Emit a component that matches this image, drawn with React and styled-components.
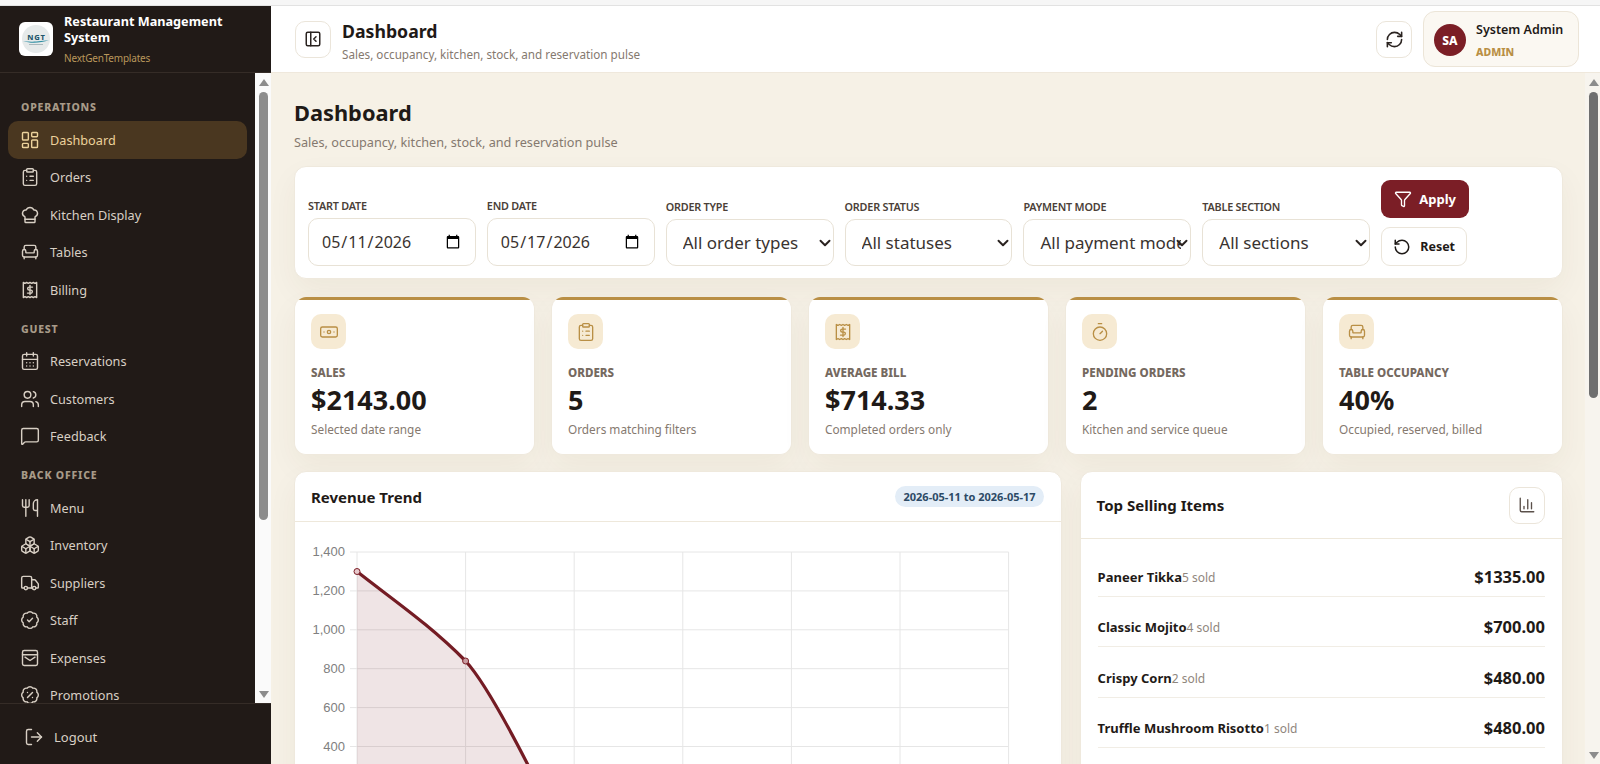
import React from 'react';
import styled, { createGlobalStyle } from 'styled-components';
import {
  LayoutDashboard, ClipboardList, ChefHat, Armchair, CalendarDays, Users, MessageSquare,
  Utensils, Boxes, Truck, BadgeCheck, BadgePercent, LogOut, PanelLeftClose, RefreshCw,
  Filter, RotateCcw, Banknote, Timer, ChartColumn, ChevronDown,
} from 'lucide-react';

const FONT = '"Noto Sans", "Open Sans", sans-serif';

const GlobalStyle = createGlobalStyle`
  * { box-sizing: border-box; }
  html, body { margin: 0; height: 100%; overflow: hidden; }
  body { font-family: ${FONT}; color: #1f1a17; background: #f5f5f5; }
  #root { height: 100%; }
`;

// the scalloped bill used for Billing and Average Bill
const BillIcon = ({ size = 24, strokeWidth = 2 }) => (
  <svg width={size} height={size} viewBox="0 0 24 24" fill="none" stroke="currentColor" strokeWidth={strokeWidth} strokeLinecap="round" strokeLinejoin="round">
    <path d="M4 3l2 1 2-1 2 1 2-1 2 1 2-1 2 1 2-1v18l-2-1-2 1-2-1-2 1-2-1-2 1-2-1-2 1z" />
    <path d="M15 8.5h-4a1.8 1.8 0 0 0 0 3.6h2a1.8 1.8 0 0 1 0 3.6H9" />
    <path d="M12 6.5v11" />
  </svg>
);

const ExpenseIcon = ({ size = 24, strokeWidth = 2 }) => (
  <svg width={size} height={size} viewBox="0 0 24 24" fill="none" stroke="currentColor" strokeWidth={strokeWidth} strokeLinecap="round" strokeLinejoin="round">
    <rect x="3" y="3" width="18" height="18" rx="2" />
    <path d="M3 8h18" />
    <path d="M6 11l6 4 6-4" />
  </svg>
);

const LogoMark = () => (
  <svg width="30" height="30" viewBox="0 0 30 30">
    <circle cx="15" cy="15" r="14" fill="#e6eaea" />
    <path d="M2 17c6 1 12 1 26-1-8 3-18 4-26 1z" fill="#2f8fa3" />
    <text x="15.5" y="15.5" fontSize="7.5" fontWeight="800" fontFamily="Noto Sans, sans-serif" textAnchor="middle" fill="#23566b" letterSpacing="0.8">NGT</text>
    <rect x="8" y="20" width="14" height="1" fill="#a9b8bc" />
  </svg>
);

const NAV = [
  { title: 'OPERATIONS', items: [
    { label: 'Dashboard', icon: LayoutDashboard, active: true },
    { label: 'Orders', icon: ClipboardList },
    { label: 'Kitchen Display', icon: ChefHat },
    { label: 'Tables', icon: Armchair },
    { label: 'Billing', icon: BillIcon },
  ] },
  { title: 'GUEST', items: [
    { label: 'Reservations', icon: CalendarDays },
    { label: 'Customers', icon: Users },
    { label: 'Feedback', icon: MessageSquare },
  ] },
  { title: 'BACK OFFICE', items: [
    { label: 'Menu', icon: Utensils },
    { label: 'Inventory', icon: Boxes },
    { label: 'Suppliers', icon: Truck },
    { label: 'Staff', icon: BadgeCheck },
    { label: 'Expenses', icon: ExpenseIcon },
    { label: 'Promotions', icon: BadgePercent },
  ] },
];

const FILTERS = [
  { label: 'ORDER TYPE', value: 'All order types' },
  { label: 'ORDER STATUS', value: 'All statuses' },
  { label: 'PAYMENT MODE', value: 'All payment modes' },
  { label: 'TABLE SECTION', value: 'All sections' },
];

const KPIS = [
  { label: 'SALES', value: '$2143.00', note: 'Selected date range', icon: Banknote },
  { label: 'ORDERS', value: '5', note: 'Orders matching filters', icon: ClipboardList },
  { label: 'AVERAGE BILL', value: '$714.33', note: 'Completed orders only', icon: BillIcon },
  { label: 'PENDING ORDERS', value: '2', note: 'Kitchen and service queue', icon: Timer },
  { label: 'TABLE OCCUPANCY', value: '40%', note: 'Occupied, reserved, billed', icon: Armchair },
];

const TOP_ITEMS = [
  { name: 'Paneer Tikka', sold: '5 sold', price: '$1335.00' },
  { name: 'Classic Mojito', sold: '4 sold', price: '$700.00' },
  { name: 'Crispy Corn', sold: '2 sold', price: '$480.00' },
  { name: 'Truffle Mushroom Risotto', sold: '1 sold', price: '$480.00' },
];

const TICKS = ['1,400', '1,200', '1,000', '800', '600', '400'];

const RevenueChart = () => {
  const left = 58;
  const top = 14;
  const stepY = 38.9;
  const stepX = 108.6;
  const bottom = 240;
  const right = left + stepX * 6;
  const line = `M${left} ${top + 19.5}C${left + 36} ${top + 48} ${left + 72} ${top + 72} ${left + stepX} ${top + 109}C${left + 125} ${top + 127} ${left + 148} ${top + 168} ${left + 171} ${top + 213}L${left + 185} ${bottom}`;
  return (
    <svg width="720" height={bottom} viewBox={`0 0 720 ${bottom}`}>
      {TICKS.map((tick, i) => (
        <g key={tick}>
          <line x1={left - 7} x2={right} y1={top + stepY * i} y2={top + stepY * i} stroke="#e6e6e6" />
          <text x={left - 12} y={top + stepY * i + 4} textAnchor="end" fontSize="13" fontFamily="Liberation Sans, sans-serif" fill="#808080">{tick}</text>
        </g>
      ))}
      {[0, 1, 2, 3, 4, 5, 6].map((i) => (
        <line key={i} x1={left + stepX * i} x2={left + stepX * i} y1={top} y2={bottom} stroke="#e6e6e6" />
      ))}
      <path d={`${line}L${left} ${bottom}Z`} fill="#7b1e26" fillOpacity="0.12" />
      <path d={line} fill="none" stroke="#741c24" strokeWidth="3.2" />
      <circle cx={left} cy={top + 19.5} r="3" fill="#e7c9cc" stroke="#7b1e26" />
      <circle cx={left + stepX} cy={top + 109} r="3" fill="#c99ba0" stroke="#7b1e26" />
    </svg>
  );
};

// browser scrollbars don't show in the capture, so the rail is part of the layout
const ScrollRail = ({ thumb, color, bg, width }) => (
  <Rail $bg={bg} $width={width}>
    <ArrowUp />
    <Track><Thumb $height={thumb} $color={color} /></Track>
    <ArrowDown />
  </Rail>
);

const App = () => (
  <Shell>
    <GlobalStyle />
    <TopStrip />
    <Body>
      <Sidebar>
        <Brand>
          <LogoTile><LogoMark /></LogoTile>
          <BrandText>
            <BrandName>Restaurant Management System</BrandName>
            <BrandSub>NextGenTemplates</BrandSub>
          </BrandText>
        </Brand>
        <NavArea>
          <NavScroll>
            {NAV.map((section) => (
              <NavSection key={section.title}>
                <SectionTitle>{section.title}</SectionTitle>
                {section.items.map(({ label, icon: Icon, active }) => (
                  <NavItem key={label} $active={active}>
                    <Icon size={20} strokeWidth={1.7} />
                    <span>{label}</span>
                  </NavItem>
                ))}
              </NavSection>
            ))}
          </NavScroll>
          <ScrollRail thumb={428} color="#8c8c8c" bg="#fafafa" width={16} />
        </NavArea>
        <SideFooter>
          <LogOut size={20} strokeWidth={1.7} />
          <span>Logout</span>
        </SideFooter>
      </Sidebar>
      <Content>
        <Header>
          <IconButton><PanelLeftClose size={18} strokeWidth={2} /></IconButton>
          <HeaderText>
            <HeaderTitle>Dashboard</HeaderTitle>
            <HeaderSub>Sales, occupancy, kitchen, stock, and reservation pulse</HeaderSub>
          </HeaderText>
          <HeaderRight>
            <IconButton><RefreshCw size={19} strokeWidth={2} /></IconButton>
            <UserChip>
              <Avatar>SA</Avatar>
              <div>
                <UserName>System Admin</UserName>
                <UserRole>ADMIN</UserRole>
              </div>
            </UserChip>
          </HeaderRight>
        </Header>
        <MainArea>
          <Main>
            <PageTitle>Dashboard</PageTitle>
            <PageSub>Sales, occupancy, kitchen, stock, and reservation pulse</PageSub>

            <FilterCard>
              <Field>
                <FieldLabel>START DATE</FieldLabel>
                <DateInput type="date" defaultValue="2026-05-11" />
              </Field>
              <Field>
                <FieldLabel>END DATE</FieldLabel>
                <DateInput type="date" defaultValue="2026-05-17" />
              </Field>
              {FILTERS.map((filter) => (
                <Field key={filter.label}>
                  <FieldLabel>{filter.label}</FieldLabel>
                  <SelectWrap>
                    <Select defaultValue={filter.value}>
                      <option>{filter.value}</option>
                    </Select>
                    <SelectChevron size={18} strokeWidth={2.6} />
                  </SelectWrap>
                </Field>
              ))}
              <Actions>
                <ApplyButton><Filter size={18} strokeWidth={1.8} />Apply</ApplyButton>
                <ResetButton><RotateCcw size={18} strokeWidth={2} />Reset</ResetButton>
              </Actions>
            </FilterCard>

            <KpiGrid>
              {KPIS.map(({ label, value, note, icon: Icon }) => (
                <KpiCard key={label}>
                  <KpiIcon><Icon size={20} strokeWidth={1.6} /></KpiIcon>
                  <KpiLabel>{label}</KpiLabel>
                  <KpiValue>{value}</KpiValue>
                  <KpiNote>{note}</KpiNote>
                </KpiCard>
              ))}
            </KpiGrid>

            <PanelGrid>
              <Panel>
                <ChartHead>
                  <PanelTitle>Revenue Trend</PanelTitle>
                  <RangeBadge>2026-05-11 to 2026-05-17</RangeBadge>
                </ChartHead>
                <ChartBody><RevenueChart /></ChartBody>
              </Panel>
              <Panel>
                <TopHead>
                  <PanelTitle>Top Selling Items</PanelTitle>
                  <SmallIconButton><ChartColumn size={18} strokeWidth={1.8} /></SmallIconButton>
                </TopHead>
                <TopList>
                  {TOP_ITEMS.map((item) => (
                    <TopRow key={item.name}>
                      <TopName>{item.name}<TopSold>{item.sold}</TopSold></TopName>
                      <TopPrice>{item.price}</TopPrice>
                    </TopRow>
                  ))}
                </TopList>
              </Panel>
            </PanelGrid>
          </Main>
          <ScrollRail thumb={306} color="#6f6f6f" bg="#f7f4ee" width={15} />
        </MainArea>
      </Content>
    </Body>
  </Shell>
);

const Shell = styled.div`
  height: 100vh;
  display: flex;
  flex-direction: column;
`;
const TopStrip = styled.div`
  height: 6px;
  flex: none;
  background: #f6f6f6;
  border-bottom: 1px solid #e2e2e2;
`;
const Body = styled.div`
  flex: 1;
  min-height: 0;
  display: flex;
`;
const Sidebar = styled.aside`
  width: 271px;
  flex: none;
  display: flex;
  flex-direction: column;
  background: #211a17;
`;
const Brand = styled.div`
  height: 67px;
  flex: none;
  display: flex;
  align-items: center;
  gap: 11px;
  padding: 0 19px;
  border-bottom: 1px solid #352c27;
`;
const LogoTile = styled.div`
  width: 34px;
  height: 34px;
  flex: none;
  display: flex;
  align-items: center;
  justify-content: center;
  background: #fff;
  border-radius: 6px;
`;
const BrandText = styled.div`
  display: flex;
  flex-direction: column;
`;
const BrandName = styled.div`
  color: #fff;
  font-size: 12.7px;
  font-weight: 700;
  line-height: 16px;
`;
const BrandSub = styled.div`
  margin-top: 6px;
  color: #b9975b;
  font-size: 10px;
  line-height: 14px;
  letter-spacing: -0.2px;
`;
const NavArea = styled.div`
  flex: 1;
  min-height: 0;
  display: flex;
`;
const NavScroll = styled.nav`
  flex: 1;
  min-width: 0;
  overflow: hidden;
  padding: 26px 8px 0;
`;
const Rail = styled.div`
  width: ${(p) => p.$width}px;
  flex: none;
  display: flex;
  flex-direction: column;
  align-items: center;
  padding-left: ${(p) => (p.$width === 16 ? 1 : 2)}px;
  background: ${(p) => p.$bg};
`;
const ArrowUp = styled.div`
  width: 0;
  height: 0;
  flex: none;
  margin: 6px 0 6px;
  border-left: 5px solid transparent;
  border-right: 5px solid transparent;
  border-bottom: 7px solid #8c8c8c;
`;
const ArrowDown = styled.div`
  width: 0;
  height: 0;
  flex: none;
  margin: 6px 0 5px;
  border-left: 5px solid transparent;
  border-right: 5px solid transparent;
  border-top: 7px solid #8c8c8c;
`;
const Track = styled.div`
  flex: 1;
  min-height: 0;
`;
const Thumb = styled.div`
  width: 9px;
  height: ${(p) => p.$height}px;
  background: ${(p) => p.$color};
  border-radius: 5px;
`;
const NavSection = styled.div`
  display: flex;
  flex-direction: column;
  margin-bottom: 12px;
`;
const SectionTitle = styled.div`
  height: 17px;
  padding-left: 13px;
  margin-bottom: 5px;
  color: #a89a88;
  font-size: 10.5px;
  font-weight: 800;
  line-height: 17px;
  letter-spacing: 0.8px;
`;
const NavItem = styled.div`
  height: 37.5px;
  display: flex;
  align-items: center;
  gap: 10px;
  padding-left: 12px;
  border-radius: 10px;
  font-size: 12.7px;
  color: ${(p) => (p.$active ? '#ecd29b' : '#d8cfc4')};
  background: ${(p) => (p.$active ? '#4a3720' : 'transparent')};
`;
const SideFooter = styled.div`
  height: 61px;
  flex: none;
  display: flex;
  align-items: center;
  gap: 10px;
  padding: 5px 0 0 24px;
  color: #d8cfc4;
  font-size: 13px;
  background: #211a17;
  border-top: 1px solid #352c27;
`;
const Content = styled.div`
  flex: 1;
  min-width: 0;
  display: flex;
  flex-direction: column;
`;
const Header = styled.header`
  height: 67px;
  flex: none;
  display: flex;
  align-items: center;
  gap: 11px;
  padding: 0 21px 0 24px;
  background: #fff;
  border-bottom: 1px solid #efe8dc;
`;
const IconButton = styled.button`
  width: 36px;
  height: 37px;
  flex: none;
  display: flex;
  align-items: center;
  justify-content: center;
  padding: 0;
  color: #2a2320;
  background: #fff;
  border: 1px solid #ebe5da;
  border-radius: 10px;
`;
const SmallIconButton = styled(IconButton)`
  color: #5b504a;
`;
const HeaderText = styled.div`
  display: flex;
  flex-direction: column;
  padding-top: 2px;
`;
const HeaderTitle = styled.div`
  font-size: 17.7px;
  font-weight: 700;
  line-height: 27px;
`;
const HeaderSub = styled.div`
  color: #85796f;
  font-size: 11.7px;
  line-height: 18px;
`;
const HeaderRight = styled.div`
  margin-left: auto;
  display: flex;
  align-items: center;
  gap: 11px;
`;
const UserChip = styled.div`
  width: 156px;
  height: 56px;
  display: flex;
  align-items: center;
  gap: 10px;
  padding: 2px 10px 0;
  background: #fbf8f2;
  border: 1px solid #ece5d8;
  border-radius: 12px;
`;
const Avatar = styled.div`
  width: 32px;
  height: 32px;
  flex: none;
  display: flex;
  align-items: center;
  justify-content: center;
  color: #fff;
  font-size: 12px;
  font-weight: 800;
  background: #7b1e26;
  border-radius: 50%;
`;
const UserName = styled.div`
  font-size: 12.5px;
  font-weight: 600;
  line-height: 18px;
  white-space: nowrap;
`;
const UserRole = styled.div`
  margin-top: 6px;
  color: #b98f45;
  font-size: 10.5px;
  font-weight: 800;
  line-height: 14px;
`;
const MainArea = styled.div`
  flex: 1;
  min-height: 0;
  display: flex;
`;
const Main = styled.main`
  flex: 1;
  min-width: 0;
  overflow: hidden;
  padding: 24px 22px 0 23px;
  background: #f6f1e6;
`;
const PageTitle = styled.h1`
  margin: 0;
  font-size: 21.8px;
  font-weight: 700;
  line-height: 32px;
`;
const PageSub = styled.p`
  margin: 3px 0 14px;
  color: #85796f;
  font-size: 12.7px;
  line-height: 20px;
`;
const FilterCard = styled.section`
  height: 113px;
  display: grid;
  grid-template-columns: repeat(7, minmax(0, 1fr));
  gap: 11px;
  align-items: end;
  padding: 12px 13px;
  background: #fff;
  border: 1px solid #efe9dd;
  border-radius: 12px;
  box-shadow: 0 12px 30px rgba(70, 50, 20, 0.05);
`;
const Field = styled.label`
  display: flex;
  flex-direction: column;
  gap: 5px;
`;
const FieldLabel = styled.span`
  color: #4b3f38;
  font-size: 10.8px;
  font-weight: 600;
  line-height: 15px;
  letter-spacing: -0.2px;
`;
const DateInput = styled.input`
  width: 100%;
  height: 48px;
  padding: 0 12px;
  color: #3a3330;
  font-family: ${FONT};
  font-size: 16px;
  background: #fff;
  border: 1px solid #e8e2d6;
  border-radius: 10px;
`;
const SelectWrap = styled.div`
  position: relative;
`;
const Select = styled.select`
  width: 100%;
  height: 47px;
  padding: 0 9px 0 16px;
  appearance: none;
  color: #3a3330;
  font-family: ${FONT};
  font-size: 17px;
  background: #fff;
  border: 1px solid #e8e2d6;
  border-radius: 10px;
`;
const SelectChevron = styled(ChevronDown)`
  position: absolute;
  top: 15px;
  right: 0;
  color: #2a2320;
  pointer-events: none;
`;
const Actions = styled.div`
  display: flex;
  flex-direction: column;
  align-items: flex-start;
  gap: 9px;
`;
const ApplyButton = styled.button`
  width: 88px;
  height: 38px;
  display: flex;
  align-items: center;
  justify-content: center;
  gap: 7px;
  padding: 0;
  color: #fff;
  font-family: ${FONT};
  font-size: 13px;
  font-weight: 700;
  background: #7b1e26;
  border: none;
  border-radius: 9px;
`;
const ResetButton = styled.button`
  width: 86px;
  height: 39px;
  display: flex;
  align-items: center;
  justify-content: center;
  gap: 9px;
  padding: 0;
  color: #1f1a17;
  font-family: ${FONT};
  font-size: 12.5px;
  font-weight: 700;
  background: #fff;
  border: 1px solid #ebe5da;
  border-radius: 9px;
`;
const KpiGrid = styled.section`
  margin-top: 18px;
  display: grid;
  grid-template-columns: repeat(5, minmax(0, 1fr));
  gap: 16px;
`;
const KpiCard = styled.article`
  height: 158px;
  padding: 0 16px;
  overflow: hidden;
  background: #fff;
  border: 1px solid #efe9dd;
  border-top: none;
  border-radius: 12px;
  box-shadow: 0 12px 30px rgba(70, 50, 20, 0.05);
  &::before {
    content: '';
    display: block;
    height: 3px;
    margin: 0 -17px 14px;
    background: #b98f45;
  }
`;
const KpiIcon = styled.div`
  width: 35px;
  height: 35px;
  display: flex;
  align-items: center;
  justify-content: center;
  color: #b98f45;
  background: #f6ead3;
  border-radius: 10px;
`;
const KpiLabel = styled.div`
  margin-top: 16px;
  color: #75695f;
  font-size: 11.6px;
  font-weight: 800;
  line-height: 16px;
`;
const KpiValue = styled.div`
  font-size: 27px;
  font-weight: 700;
  line-height: 38px;
`;
const KpiNote = styled.div`
  margin-top: 1px;
  color: #85796f;
  font-size: 11.8px;
  line-height: 18px;
`;
const PanelGrid = styled.section`
  margin-top: 16px;
  display: grid;
  grid-template-columns: minmax(0, 767fr) minmax(0, 483fr);
  gap: 18px;
`;
const Panel = styled.article`
  min-height: 760px;
  background: #fff;
  border: 1px solid #efe9dd;
  border-radius: 12px;
  box-shadow: 0 12px 30px rgba(70, 50, 20, 0.05);
`;
const ChartHead = styled.div`
  height: 50px;
  display: flex;
  align-items: center;
  justify-content: space-between;
  padding: 0 17px 0 16px;
  border-bottom: 1px solid #eee8db;
`;
const TopHead = styled(ChartHead)`
  height: 67px;
  padding-right: 17px;
`;
const PanelTitle = styled.h2`
  margin: 0;
  font-size: 15px;
  font-weight: 700;
`;
const RangeBadge = styled.span`
  height: 21px;
  padding: 0 8px;
  color: #2d4a66;
  font-size: 11px;
  font-weight: 700;
  line-height: 21px;
  background: #e3edf7;
  border-radius: 11px;
`;
const ChartBody = styled.div`
  padding: 16px 0 0 4px;
`;
const TopList = styled.div`
  display: flex;
  flex-direction: column;
  padding: 7px 17px;
`;
const TopRow = styled.div`
  height: 50.6px;
  display: flex;
  align-items: flex-end;
  justify-content: space-between;
  padding-bottom: 8px;
  border-bottom: 1px solid #f1ede5;
`;
const TopName = styled.div`
  font-size: 13px;
  font-weight: 700;
  line-height: 20px;
`;
const TopSold = styled.span`
  color: #8f867d;
  font-size: 12px;
  font-weight: 400;
`;
const TopPrice = styled.div`
  font-size: 16.5px;
  font-weight: 700;
  line-height: 22px;
`;

export default App;
